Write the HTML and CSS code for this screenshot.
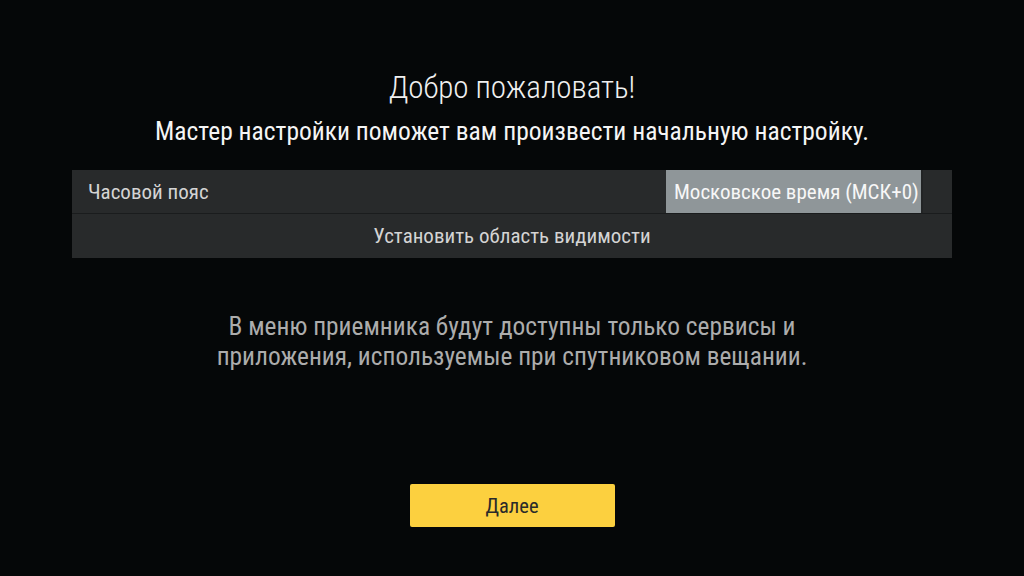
FILE: index.html
```html
<!DOCTYPE html>
<html lang="ru">
<head>
<meta charset="utf-8">
<link rel="stylesheet" href="styles.css">
</head>
<body>
<main class="wizard">
  <h1 class="title">Добро пожаловать!</h1>
  <p class="subtitle">Мастер настройки поможет вам произвести начальную настройку.</p>
  <section class="panel">
    <div class="row row-option">
      <span class="row-label">Часовой пояс</span>
      <span class="row-value">Московское время (МСК+0)</span>
      <span class="row-tail"></span>
    </div>
    <div class="row row-action">Установить область видимости</div>
  </section>
  <p class="note">В меню приемника будут доступны только сервисы и<br>приложения, используемые при спутниковом вещании.</p>
  <div class="actions">
    <button class="btn-next">Далее</button>
  </div>
</main>
</body>
</html>
```

FILE: styles.css
```css
html, body {
  margin: 0;
  padding: 0;
  background: #050708;
  width: 1024px;
  height: 576px;
  overflow: hidden;
}
body {
  font-family: "Roboto Condensed", Roboto, "Liberation Sans", sans-serif;
  font-stretch: condensed;
  color: #f2f2f2;
}
.wizard {
  display: flex;
  flex-direction: column;
  align-items: center;
  padding-top: 68px;
}
.title {
  margin: 0;
  font-size: 31px;
  font-weight: 300;
  line-height: 40px;
  color: #f0f0f0;
}
.subtitle {
  margin: 9px 0 0;
  font-size: 25.5px;
  font-weight: 400;
  line-height: 28px;
  color: #f5f5f5;
}
.panel {
  margin-top: 25px;
  width: 880px;
  background: #282a2b;
  display: flex;
  flex-direction: column;
}
.row {
  height: 43px;
  display: flex;
  align-items: center;
  font-size: 21px;
  color: #d4d4d4;
}
.row-option {
  border-bottom: 1px solid #1a1c1d;
}
.row-label {
  flex: 1;
  padding-left: 16px;
}
.row-value {
  align-self: stretch;
  display: flex;
  align-items: center;
  width: 257px;
  padding-left: 8px;
  box-sizing: border-box;
  background: #8f9699;
  color: #f7f7f7;
  border-right: 2px solid #222425;
}
.row-tail {
  width: 29px;
}
.row-action {
  height: 44px;
  justify-content: center;
}
.note {
  margin: 53px 0 0;
  text-align: center;
  font-size: 25.4px;
  line-height: 30px;
  color: #acacac;
}
.actions {
  margin-top: 113px;
}
.btn-next {
  width: 205px;
  height: 43px;
  border: none;
  border-radius: 2px;
  background: #fcd03f;
  color: #2a2a2a;
  font-family: inherit;
  font-stretch: condensed;
  font-size: 20.5px;
  padding: 0;
}
```
